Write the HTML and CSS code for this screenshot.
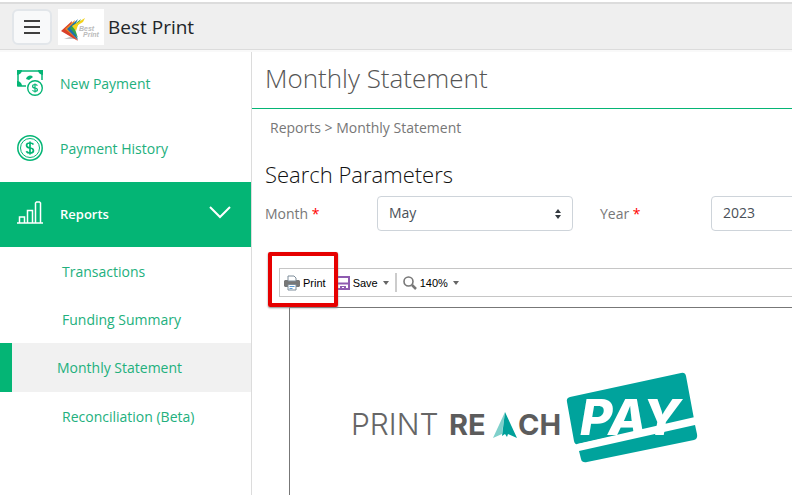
FILE: index.html
```html
<!DOCTYPE html>
<html lang="en">

	<head>
		<meta charset="utf-8">
		<title>Monthly Statement</title>
		<link rel="stylesheet" href="styles.css">
	</head>

	<body>
		<header class="topbar">
			<button class="menu-btn" type="button" aria-label="Menu">
				<svg width="16" height="14" viewBox="0 0 16 14" stroke="#000" stroke-width="1.6"><path d="M0 1h16M0 7h16M0 13h16"/></svg>
			</button>
			<svg class="brand-logo" width="46" height="36" viewBox="0 0 46 36">
				<rect width="46" height="36" fill="#fff"/>
				<path d="M6 30l8-3 3 3z" fill="#c4c4c4"/>
				<path d="M3 22L14 12 13 18 12 22 20 32z" fill="#d9402a"/>
				<path d="M7 20L17 11 15 17 14 21 20 31z" fill="#f08a1d"/>
				<path d="M9 20L20 10 17 16 16 20 20 31z" fill="#1d6fae"/>
				<path d="M12 19L23 10 20 16 17 20 20 29z" fill="#37a34a"/>
				<path d="M14 17L27 9 25 13 20 16 18 22z" fill="#f3d21b"/>
				<text class="brand-small" x="21" y="22">Best</text>
				<text class="brand-small" x="25" y="28">Print</text>
			</svg>
			<span class="brand">Best Print</span>
		</header>

		<div class="layout">
			<nav class="sidebar">
				<a class="nav-item" href="#">
					<svg class="nav-icon" width="26" height="26" viewBox="0 0 26 26">
						<path d="M1 1h24v9M1 1v15h8" fill="none" stroke="#04b575" stroke-width="1.5"/>
						<path d="M0 0h5a5 5 0 0 1-5 5zM26 0h-5a5 5 0 0 0 5 5zM0 16v-5a5 5 0 0 1 5 5zM9 9a4 4 0 0 1 7-2l-4 3z" fill="#04b575"/>
						<circle cx="18" cy="18" r="7.3" fill="#fff" stroke="#04b575" stroke-width="1.4"/>
						<path d="M20.400 15.600c-.5-.8-1.300-1.100-2.400-1.100-3.200 0-3.200 3.200 0 3.500s3.200 3.500 0 3.500c-1.200 0-2-.4-2.500-1.200M18 13.400v9.200" fill="none" stroke="#04b575" stroke-width="1.200"/>
					</svg>
					<span>New Payment</span>
				</a>
				<a class="nav-item" href="#">
					<svg class="nav-icon" width="26" height="26" viewBox="0 0 26 26" fill="none" stroke="#04b575">
						<circle cx="13" cy="13" r="12.200" stroke-width="1.500"/>
						<circle cx="13" cy="13" r="9.500" stroke-width="1"/>
						<path d="M16.500 9.600c-.7-1-1.900-1.600-3.500-1.600-4.600 0-4.600 4.500 0 5s4.600 5 0 5c-1.700 0-3-.6-3.700-1.800M13 6.500v13" stroke-width="1.700"/>
					</svg>
					<span>Payment History</span>
				</a>
				<a class="nav-item open" href="#">
					<svg class="nav-icon" width="26" height="26" viewBox="0 0 26 26" fill="none" stroke="#fff" stroke-width="1.500">
						<path d="M0 23h26M2.500 23v-6h5v6M10.500 23v-12.500h5v12.500M18.500 23v-20l1-1h3l1 1v20"/>
					</svg>
					<span>Reports</span>
					<svg class="chevron" width="22" height="13" viewBox="0 0 22 13" fill="none" stroke="#fff" stroke-width="2"><path d="M1 1l10 10L21 1"/></svg>
				</a>
				<ul class="subnav">
					<li><a href="#">Transactions</a></li>
					<li><a href="#">Funding Summary</a></li>
					<li><a class="active" href="#">Monthly Statement</a></li>
					<li><a href="#">Reconciliation (Beta)</a></li>
				</ul>
			</nav>

			<main class="content">
				<h1 class="page-title">Monthly Statement</h1>
				<div class="breadcrumb">Reports &gt; Monthly Statement</div>
				<h2 class="section-title">Search Parameters</h2>
				<form class="search-form">
					<label for="month">Month <span class="required">*</span></label>
					<div class="select-box">
						<select id="month"><option>May</option></select>
						<svg class="caret" width="8" height="10" viewBox="0 0 8 10" fill="#343a40"><path d="M1 4l3-4 3 4zM1 6h6l-3 4z"/></svg>
					</div>
					<label class="year-label" for="year">Year <span class="required">*</span></label>
					<div class="select-box">
						<select id="year"><option>2023</option></select>
						<svg class="caret" width="8" height="10" viewBox="0 0 8 10" fill="#343a40"><path d="M1 4l3-4 3 4zM1 6h6l-3 4z"/></svg>
					</div>
				</form>

				<div class="viewer">
					<div class="toolbar">
						<button class="tool print" type="button">
							<svg width="16" height="16" viewBox="0 0 16 16">
								<path d="M1 5h14l1 1v5l-1 1H1l-1-1V6z" fill="#777"/>
								<path d="M4 6V1h6l2 2v3z" fill="#fff" stroke="#7d8c99"/>
								<path d="M4 9.500h8v5.500h-8z" fill="#fff" stroke="#7d8c99"/>
								<path d="M5.500 11.500h5M5.500 13.500h3" stroke="#5b9bd5"/>
							</svg>
							Print
						</button>
						<button class="tool" type="button">
							<svg width="14" height="14" viewBox="0 0 14 14">
								<path d="M1 1h12v12H1z" fill="#fff" stroke="#8e5bb0" stroke-width="2"/>
								<path d="M2 7.500h10" stroke="#8e5bb0" stroke-width="2"/>
								<path d="M4 10h6v3H8v-2H6v2H4z" fill="#8e5bb0"/>
							</svg>
							Save
							<svg class="drop" width="6" height="4" viewBox="0 0 6 4"><path d="M0 0h6L3 4z" fill="#666"/></svg>
						</button>
						<span class="divider"></span>
						<button class="tool" type="button">
							<svg width="14" height="14" viewBox="0 0 14 14" fill="none" stroke="#777"><circle cx="5.500" cy="5.500" r="4.500" stroke-width="1.600"/><path d="M9 9l4 4" stroke-width="2.500"/></svg>
							140%
							<svg class="drop" width="6" height="4" viewBox="0 0 6 4"><path d="M0 0h6L3 4z" fill="#666"/></svg>
						</button>
						<span class="highlight"></span>
					</div>
					<div class="report">
						<svg class="report-logo" width="350" height="96" viewBox="0 0 350 96">
							<text class="logo-light" x="1" y="65">PRINT</text>
							<text class="logo-bold" x="99" y="65">RE</text>
							<path d="M155 42l-12 26 9-4z" fill="#7fd0cb"/>
							<path d="M155 42l12 26-9-4-1 3-2-3-3 2z" fill="#00a09a"/>
							<text class="logo-bold" x="168" y="65">CH</text>
							<path d="M220 27L331 3q4-1 5 3l8 43-116 25q-3 1-4-3l-7-39q-1-4 3-5z" fill="#00a39c"/>
							<path d="M227 74l118-27 1 8-118 27z" fill="#fff"/>
							<path d="M229 81l116-26 2 9q1 5-3 6l-107 22q-5 1-6-3z" fill="#00a39c"/>
							<text class="logo-pay" x="230" y="65">PAY</text>
						</svg>
					</div>
				</div>
			</main>
		</div>
	</body>

</html>
```
FILE: styles.css
```css
* {
	box-sizing: border-box;
}

body {
	margin: 0;
	min-height: 100vh;
	display: flex;
	flex-direction: column;
	overflow: hidden;
	background: #fff;
	font-family: "Open Sans", sans-serif;
	font-size: 14px;
	color: #777;
}

a {
	color: #22b07d;
	text-decoration: none;
}

.topbar {
	display: flex;
	align-items: center;
	height: 48px;
	margin-top: 2px;
	padding: 0 12px;
	background: #efefef;
	border-top: 2px solid #dcdcdc;
	border-bottom: 1px solid #dcdcdc;
}

.menu-btn {
	display: flex;
	align-items: center;
	justify-content: center;
	width: 40px;
	height: 36px;
	padding: 0;
	background: #f8f9fa;
	border: 2px solid #e2e6ea;
	border-radius: 6px;
}

.brand-logo {
	margin: 0 4px 0 6px;
}

.brand-small {
	font: italic bold 7px "Liberation Sans", sans-serif;
	fill: #bbb;
}

.brand {
	font-size: 19px;
	color: #212529;
}

.layout {
	flex: 1;
	display: flex;
	border-top: 2px solid #f9f9f9;
}

.sidebar {
	flex: 0 0 252px;
	border-right: 1px solid #dcdcdc;
}

.nav-item {
	display: flex;
	align-items: center;
	height: 65px;
	padding: 0 20px 2px 17px;
}

.nav-icon {
	margin: 0 17px 2px 0;
}

.open {
	background: #04b575;
	color: #fff;
	font-weight: 600;
	font-size: 13px;
}

.chevron {
	margin: 0 0 2px auto;
}

.subnav {
	margin: 0;
	padding: 0;
	list-style: none;
}

.subnav a {
	display: flex;
	align-items: center;
	height: 48px;
	padding-left: 62px;
}

.subnav .active {
	height: 49px;
	padding-left: 45px;
	background: #f1f1f1;
	border-left: 12px solid #04b575;
}

.content {
	flex: 1;
	min-width: 0;
	display: flex;
	flex-direction: column;
	overflow: hidden;
}

.page-title {
	margin: 0;
	padding: 8px 13px 12px;
	border-bottom: 1px solid #04b575;
	font-size: 26px;
	font-weight: 300;
	line-height: 36px;
	color: #555;
}

.breadcrumb {
	padding: 9px 18px;
	line-height: 20px;
}

.section-title {
	margin: 0;
	padding: 12px 13px 7px;
	font-size: 22px;
	font-weight: 300;
	line-height: 30px;
	color: #111;
}

.search-form {
	display: grid;
	grid-template-columns: 112px 196px 138px 196px;
	align-items: center;
	padding-left: 13px;
}

.year-label {
	padding-left: 27px;
}

.required {
	color: #f00;
}

.select-box {
	position: relative;
}

.select-box select {
	width: 100%;
	height: 35px;
	padding: 0 11px 2px;
	appearance: none;
	background: #fff;
	border: 1px solid #ced4da;
	border-radius: 4px;
	font: inherit;
	color: #495057;
}

.caret {
	position: absolute;
	right: 11px;
	top: 13px;
	pointer-events: none;
}

.viewer {
	flex: 1;
	display: flex;
	flex-direction: column;
	padding: 37px 0 0 27px;
}

.toolbar {
	position: relative;
	display: flex;
	align-items: center;
	height: 29px;
	padding-left: 4px;
	border: 1px solid #c6c6c6;
	border-right: 0;
}

.tool {
	display: flex;
	align-items: center;
	gap: 3px;
	padding: 0;
	background: none;
	border: 0;
	font: 11px "Liberation Sans", sans-serif;
	color: #000;
}

.print {
	margin-right: 10px;
}

.drop {
	margin-left: 2px;
}

.divider {
	width: 2px;
	height: 19px;
	margin: 0 6px;
	background: #ccc;
}

.highlight {
	position: absolute;
	left: -12px;
	top: -17px;
	width: 70px;
	height: 55px;
	border: 4px solid #e60000;
	border-radius: 2px;
	box-shadow: 0 1px 2px #888;
}

.report {
	flex: 1;
	margin: 10px 0 0 10px;
	padding: 62px 0 0 60px;
	border-top: 1px solid #777;
	border-left: 1px solid #777;
}

.report-logo {
	display: block;
}

.logo-light {
	font: 300 30px Inter, sans-serif;
	fill: #666;
}

.logo-bold {
	font: 700 29px Inter, sans-serif;
	fill: #5c5c5c;
}

.logo-pay {
	font: italic 800 50px Inter, sans-serif;
	fill: #fff;
}
```
